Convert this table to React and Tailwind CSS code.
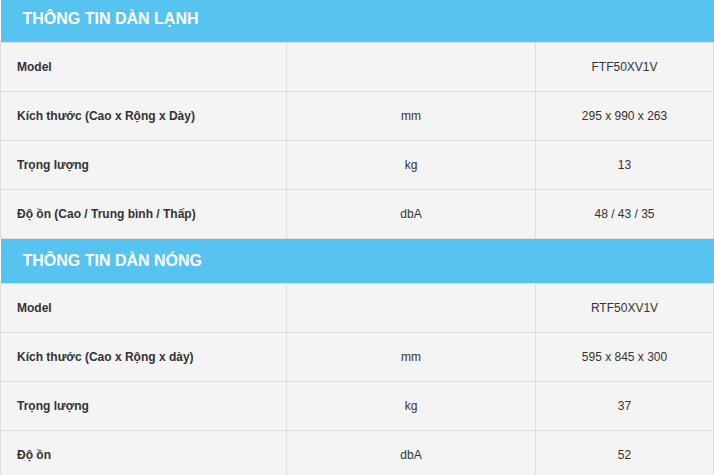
const sections = [
  {
    title: "THÔNG TIN DÀN LẠNH",
    first: true,
    rows: [
      ["Model", "", "FTF50XV1V"],
      ["Kích thước (Cao x Rộng x Dày)", "mm", "295 x 990 x 263"],
      ["Trọng lượng", "kg", "13"],
      ["Độ ồn (Cao / Trung bình / Thấp)", "dbA", "48 / 43 / 35"],
    ],
  },
  {
    title: "THÔNG TIN DÀN NÓNG",
    rows: [
      ["Model", "", "RTF50XV1V"],
      ["Kích thước (Cao x Rộng x dày)", "mm", "595 x 845 x 300"],
      ["Trọng lượng", "kg", "37"],
      ["Độ ồn", "dbA", "52"],
    ],
  },
];

export default function App() {
  return (
    <div className="w-[714px] h-[475px] overflow-hidden bg-white font-['Liberation_Sans',Arial,sans-serif] text-[12px] text-[#333]">
      <table className="w-full border-collapse table-fixed">
        <colgroup>
          <col className="w-[286px]" />
          <col className="w-[249px]" />
          <col />
        </colgroup>
        <tbody>
          {sections.map((s) => (
            <Section key={s.title} {...s} />
          ))}
        </tbody>
      </table>
    </div>
  );
}

function Section({ title, rows, first }) {
  return (
    <>
      <tr>
        <td
          colSpan={3}
          className={
            first
              ? "h-[42px] bg-[#56c3f0] pl-[22px] pb-[3px] text-[16px] font-bold text-white"
              : "h-[45px] bg-[#56c3f0] pl-[22px] text-[16px] font-bold text-white"
          }
        >
          {title}
        </td>
      </tr>
      {rows.map(([label, unit, value]) => (
        <tr key={label} className="h-[49px] bg-[#f4f4f4]">
          <td className="border border-[#dddddd] pl-[16px] font-bold">{label}</td>
          <td className="border border-[#dddddd] text-center">{unit}</td>
          <td className="border border-[#dddddd] text-center">{value}</td>
        </tr>
      ))}
    </>
  );
}
